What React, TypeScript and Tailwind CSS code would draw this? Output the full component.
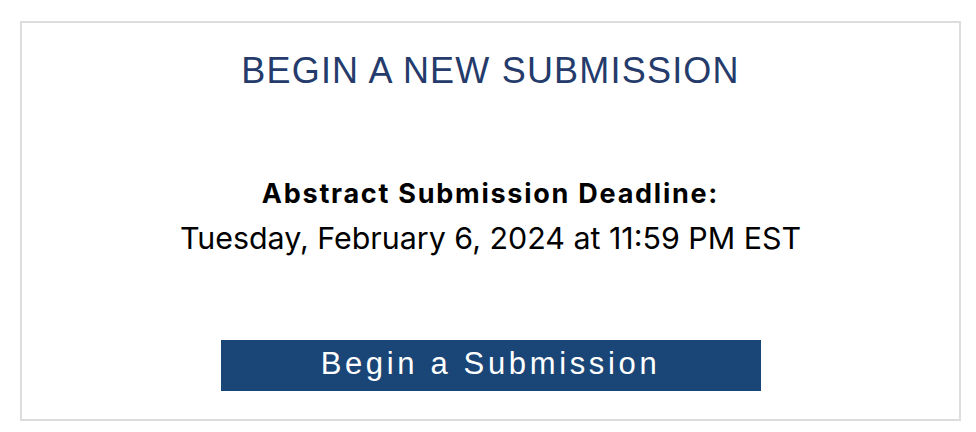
export default function App() {
  return (
    <div className="w-[976px] h-[432px] bg-white pt-[21px] pl-[20px]">
      {/* Submission card */}
      <div className="w-[941px] h-[400px] border-2 border-[#dddddd] flex flex-col items-center pt-[28px]">
        <h1 className="text-[36px] leading-[40px] tracking-[1.2px] text-[#243b6b] font-['Liberation_Sans',Arial,sans-serif] font-normal">
          BEGIN A NEW SUBMISSION
        </h1>

        <div className="mt-[86px] flex flex-col items-center text-black font-['Inter','Noto_Sans',sans-serif]">
          <div className="text-[27px] leading-[34px] font-bold tracking-[1.75px]">Abstract Submission Deadline:</div>
          <div className="mt-[8px] text-[30.4px] leading-[38px] font-normal">Tuesday, February 6, 2024 at 11:59 PM EST</div>
        </div>

        <button className="mt-[83px] w-[540px] h-[51px] pb-[2px] bg-[#1a4677] text-white text-[31px] tracking-[3.65px] font-['Liberation_Sans',Arial,sans-serif] flex items-center justify-center">
          Begin a Submission
        </button>
      </div>
    </div>
  );
}
